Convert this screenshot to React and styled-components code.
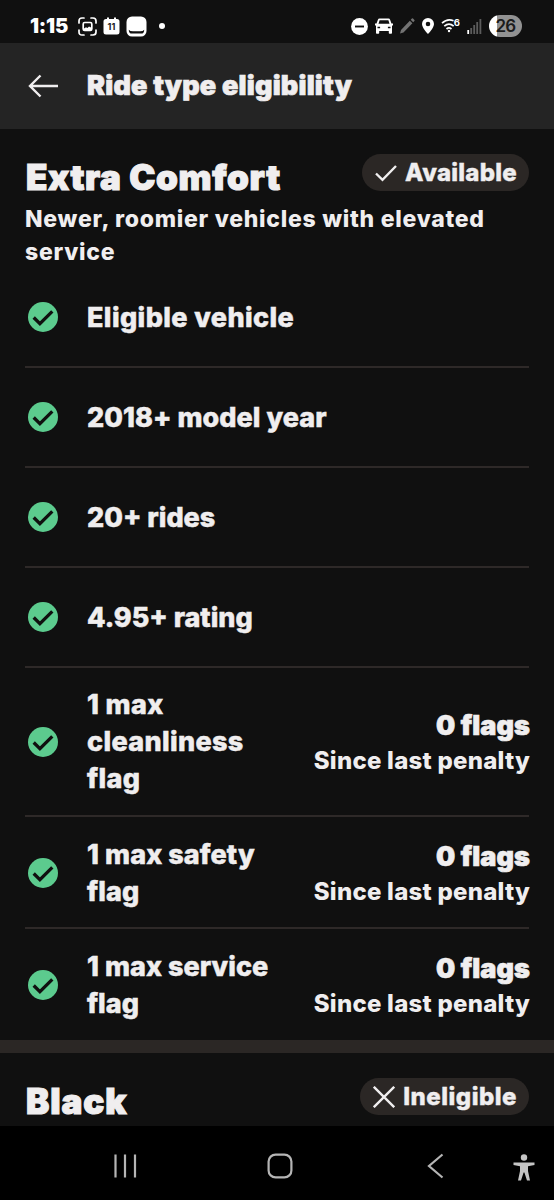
import React from "react";
import styled, { createGlobalStyle } from "styled-components";

const GlobalStyle = createGlobalStyle`
  * {
    box-sizing: border-box;
  }

  body {
    margin: 0;
    background: #000;
    color: #f0eeef;
    font-family: Inter, "Liberation Sans", sans-serif;
  }
`;

const Screen = styled.div`
  width: 554px;
  height: 1200px;
  display: flex;
  flex-direction: column;
  overflow: hidden;
  background: #101010;
`;

const StatusBar = styled.div`
  height: 43px;
  flex: none;
  display: flex;
  align-items: center;
  justify-content: space-between;
  padding: 9px 32px 0 30px;
  color: #fff;
`;

const StatusGroup = styled.div`
  display: flex;
  align-items: center;
  gap: ${(props) => props.$gap};
`;

const Clock = styled.span`
  width: 39px;
  margin-right: 3px;
  font-size: 20px;
  font-weight: 900;
  line-height: 24px;
  letter-spacing: -0.2px;
  white-space: nowrap;
`;

const Dot = styled.span`
  width: 6px;
  height: 6px;
  margin-left: 6px;
  border-radius: 50%;
  background: #fff;
`;

const Battery = styled.span`
  width: 33px;
  height: 22px;
  display: flex;
  align-items: center;
  justify-content: center;
  border-radius: 11px;
  background: linear-gradient(to right, #fff 23%, #929292 25%);
  color: #1b1b1b;
  font-size: 17px;
  font-weight: 600;
  line-height: 22px;
  letter-spacing: -0.7px;
`;

const Header = styled.header`
  height: 86px;
  flex: none;
  display: flex;
  align-items: center;
  gap: 28px;
  padding-left: 28px;
  background: #242424;
`;

const Title = styled.h1`
  margin: 0;
  font-size: 27px;
  font-weight: 900;
  line-height: 36px;
  letter-spacing: 0.2px;
  -webkit-text-stroke: 0.7px currentColor;
  white-space: nowrap;
`;

const Content = styled.main`
  height: 997px;
  flex: none;
  overflow: hidden;
`;

const RideHeader = styled.div`
  display: flex;
  align-items: flex-start;
  justify-content: space-between;
  padding: 25px 25px 0;
`;

const RideName = styled.h2`
  margin: 3px 0 0 1px;
  font-size: 35px;
  font-weight: 900;
  line-height: 40px;
  letter-spacing: ${(props) => props.$spacing};
  -webkit-text-stroke: 1.1px currentColor;
  white-space: nowrap;
`;

const Badge = styled.span`
  height: 37px;
  display: flex;
  align-items: center;
  gap: 8px;
  padding: 0 12px 0 13px;
  border-radius: 19px;
  background: #2b2725;
  font-size: 24px;
  font-weight: 800;
  letter-spacing: ${(props) => props.$spacing};
  -webkit-text-stroke: 0.4px currentColor;
  white-space: nowrap;
`;

const Description = styled.p`
  height: 71px;
  margin: 0;
  padding: 6px 25px 0;
  font-size: 23px;
  font-weight: 800;
  line-height: 33px;
  letter-spacing: 0.73px;
`;

const List = styled.ul`
  margin: 0;
  padding: 0 25px;
  list-style: none;
`;

const Item = styled.li`
  min-height: 100px;
  display: flex;
  align-items: center;
  padding: 18px 0;
  border-bottom: 2px solid #2e2928;

  &:nth-last-child(2) {
    padding: 19px 0 17px;
  }

  &:last-child {
    padding: 19px 0 18px;
    border-bottom: none;
  }
`;

const Label = styled.span`
  flex: 1;
  padding-left: 26px;
  font-size: 27px;
  font-weight: 800;
  line-height: 37px;
  letter-spacing: ${(props) => props.$spacing};
  -webkit-text-stroke: 0.5px currentColor;
  white-space: pre-line;
`;

const Result = styled.div`
  margin-right: -1px;
  text-align: right;
  white-space: nowrap;
`;

const Count = styled.div`
  font-size: 27px;
  font-weight: 900;
  line-height: 37px;
  letter-spacing: 0.1px;
  -webkit-text-stroke: 0.7px currentColor;
`;

const Since = styled.div`
  font-size: 24px;
  font-weight: 800;
  line-height: 33px;
  letter-spacing: 0.25px;
`;

const SectionBand = styled.div`
  height: 13px;
  background: #2b2725;
`;

const NavBar = styled.nav`
  height: 74px;
  flex: none;
  display: flex;
  align-items: center;
  padding: 5px 18px 0 112px;
  background: #000;
`;

const NavSlot = styled.div`
  width: ${(props) => props.$width};
  display: flex;
`;

const requirements = [
  { label: "Eligible vehicle", spacing: "0.4px" },
  { label: "2018+ model year", spacing: "0.05px" },
  { label: "20+ rides", spacing: "0px" },
  { label: "4.95+ rating", spacing: "0px" },
  { label: "1 max\ncleanliness\nflag", spacing: "0.35px", count: "0 flags" },
  { label: "1 max safety\nflag", spacing: "0.1px", count: "0 flags" },
  { label: "1 max service\nflag", spacing: "0.05px", count: "0 flags" },
];

const CaptureIcon = () => (
  <svg width="19" height="19" viewBox="0 0 19 19" fill="none" stroke="#fff" strokeWidth="1.7" strokeLinecap="round">
    <path d="M1 6V4Q1 1 4 1H6M13 1h2q3 0 3 3v2M18 13v2q0 3-3 3h-2M6 18H4q-3 0-3-3v-2" />
    <rect x="5.2" y="5.5" width="8.600" height="8" rx="1.5" />
    <path d="M6 13v-1.500l2-1.200 1.400.7 1.600-1.500 2 1V13z" fill="#fff" stroke="none" />
  </svg>
);

const CalendarIcon = () => (
  <svg width="17" height="18" viewBox="0 0 17 18">
    <path d="M3 2h1V.5h2V2h5V.5h2V2h1q2.500 0 2.500 2.500V15q0 2.500-2.500 2.500H3Q.5 17.500.5 15V4.500Q.5 2 3 2z" fill="#fff" />
    <text x="8.500" y="13.200" textAnchor="middle" fontFamily="Inter, sans-serif" fontSize="9" fontWeight="700" fill="#222">
      11
    </text>
  </svg>
);

const AppIcon = () => (
  <svg width="21" height="21" viewBox="0 0 21 21">
    <rect x="0.500" y="0.500" width="20" height="20" rx="5.500" fill="#fff" />
    <path d="M2.800 13.700q0 3.900 3.200 3.900h9q3.200 0 3.200-3.900-1.200 1.500-4 1.500H7q-3 0-4.200-1.500z" fill="#111" />
  </svg>
);

const DoNotDisturbIcon = () => (
  <svg width="17" height="17" viewBox="0 0 17 17">
    <circle cx="8.500" cy="8.500" r="8.400" fill="#fff" />
    <path d="M4 8.500h9" stroke="#111" strokeWidth="1.900" />
  </svg>
);

const CarIcon = () => (
  <svg width="18" height="16" viewBox="0 0 18 16">
    <path
      fill="#fff"
      fillRule="evenodd"
      d="M4.500.5h9q1.200 0 1.600 1.200L16.500 5.500H18v2h-1v7.500q0 .8-.8.8h-1.600q-.8 0-.8-.8V13H4.200v2q0 .8-.8.8H1.800q-.8 0-.8-.8V7.500H0v-2h1.500l1.400-3.800Q3.300.5 4.500.5zM4.600 2.200 3.500 5.700h11l-1.100-3.500zM2.500 8.700v1.500h2.600V8.700zM12.900 8.700v1.500h2.600V8.700z"
    />
  </svg>
);

const PencilIcon = () => (
  <svg width="15" height="16" viewBox="0 0 15 16" fill="#737373">
    <path d="M0 15.500 1 12l8.800-9.300 2.600 2.500L3.500 14.500zM10.700 1.800l1.200-1.200q.6-.5 1.100 0l1.400 1.400q.5.600 0 1.100l-1.200 1.200z" />
  </svg>
);

const PinIcon = () => (
  <svg width="12" height="16" viewBox="0 0 12 16">
    <path
      fill="#fff"
      fillRule="evenodd"
      d="M6 0a6 6 0 0 1 6 6c0 4-6 10-6 10S0 10 0 6a6 6 0 0 1 6-6zm0 3.700a2.300 2.300 0 1 0 0 4.600 2.300 2.300 0 0 0 0-4.600z"
    />
  </svg>
);

const WifiIcon = () => (
  <svg width="19" height="16" viewBox="0 0 19 16">
    <g fill="none" stroke="#fff" strokeWidth="1.700">
      <path d="M1 5.200Q6.500 0 12.500 2.800M3.300 8.200q4.700-4.200 9.400 0M5.500 11q2.500-2.200 5 0" />
    </g>
    <circle cx="8" cy="13" r="1.200" fill="#fff" />
    <text x="12.800" y="8" fontFamily="Inter, sans-serif" fontSize="9.500" fontWeight="700" fill="#fff">
      6
    </text>
  </svg>
);

const SignalIcon = () => (
  <svg width="15" height="16" viewBox="0 0 15 16">
    <path d="M.3 12h1.800v4H.3z" fill="#fff" />
    <path d="M3.300 10h1.800v6H3.300zM6.300 7h1.800v9H6.300zM9.300 4h1.800v12H9.300zM12.500 1h1.800v15h-1.800z" fill="#5c5c5c" />
  </svg>
);

const BackArrow = () => (
  <svg width="31" height="24" viewBox="0 0 31 24" fill="none" stroke="#f0eeef" strokeWidth="2.400">
    <path d="M30 12H2M12.500 1.500 2 12l10.500 10.500" />
  </svg>
);

const CheckCircle = () => (
  <svg width="36" height="30" viewBox="0 0 36 30">
    <circle cx="18" cy="15" r="15" fill="#5ccb8e" />
    <path d="m8.700 15.500 6.200 6.100L27.300 9.300" fill="none" stroke="#101010" strokeWidth="3.300" />
  </svg>
);

const CheckIcon = () => (
  <svg width="22" height="18" viewBox="0 0 22 18" fill="none" stroke="#f0eeef" strokeWidth="2.400">
    <path d="m1 9.500 6.500 6.300L21 2" />
  </svg>
);

const CrossIcon = () => (
  <svg width="22" height="22" viewBox="0 0 22 22" fill="none" stroke="#f0eeef" strokeWidth="2.400">
    <path d="m.8.800 20.400 20.400M21.200.800.8 21.200" />
  </svg>
);

const App = () => {
  return (
    <>
      <GlobalStyle />
      <Screen>
        <StatusBar>
          <StatusGroup $gap="6px">
            <Clock>1:15</Clock>
            <CaptureIcon />
            <CalendarIcon />
            <AppIcon />
            <Dot />
          </StatusGroup>
          <StatusGroup $gap="7px">
            <DoNotDisturbIcon />
            <CarIcon />
            <PencilIcon />
            <PinIcon />
            <WifiIcon />
            <SignalIcon />
            <Battery>26</Battery>
          </StatusGroup>
        </StatusBar>

        <Header>
          <BackArrow />
          <Title>Ride type eligibility</Title>
        </Header>

        <Content>
          <RideHeader>
            <RideName $spacing="0.65px">Extra Comfort</RideName>
            <Badge $spacing="0.25px">
              <CheckIcon />
              Available
            </Badge>
          </RideHeader>
          <Description>
            Newer, roomier vehicles with elevated
            <br />
            service
          </Description>
          <List>
            {requirements.map((item) => (
              <Item key={item.label}>
                <CheckCircle />
                <Label $spacing={item.spacing}>{item.label}</Label>
                {item.count && (
                  <Result>
                    <Count>{item.count}</Count>
                    <Since>Since last penalty</Since>
                  </Result>
                )}
              </Item>
            ))}
          </List>
          <SectionBand />
          <RideHeader>
            <RideName $spacing="0.9px">Black</RideName>
            <Badge $spacing="0.5px">
              <CrossIcon />
              Ineligible
            </Badge>
          </RideHeader>
        </Content>

        <NavBar>
          <NavSlot $width="155px">
            <svg width="26" height="26" viewBox="0 0 26 26" stroke="#b5b5b5" strokeWidth="2.200">
              <path d="M3.500 1.500v23M13 1.500v23M23 1.500v23" />
            </svg>
          </NavSlot>
          <NavSlot $width="159px">
            <svg width="26" height="26" viewBox="0 0 26 26" fill="none" stroke="#b5b5b5" strokeWidth="2.200">
              <rect x="1.600" y="1.600" width="22.800" height="22.800" rx="7" />
            </svg>
          </NavSlot>
          <NavSlot $width="87px">
            <svg width="18" height="26" viewBox="0 0 18 26" fill="none" stroke="#b5b5b5" strokeWidth="2.200">
              <path d="M16.500 1.500 3 13l13.500 11.500" />
            </svg>
          </NavSlot>
          <svg width="22" height="31" viewBox="0 0 22 31" fill="#c4c4c4">
            <circle cx="11" cy="7.500" r="3.200" />
            <path d="M.5 12.500h21v2.500l-6.500 1.300v4.700l2 9.500h-3l-2.600-8h-.8l-2.600 8H5l2-9.500v-4.700L.5 15z" />
          </svg>
        </NavBar>
      </Screen>
    </>
  );
};

export default App;
